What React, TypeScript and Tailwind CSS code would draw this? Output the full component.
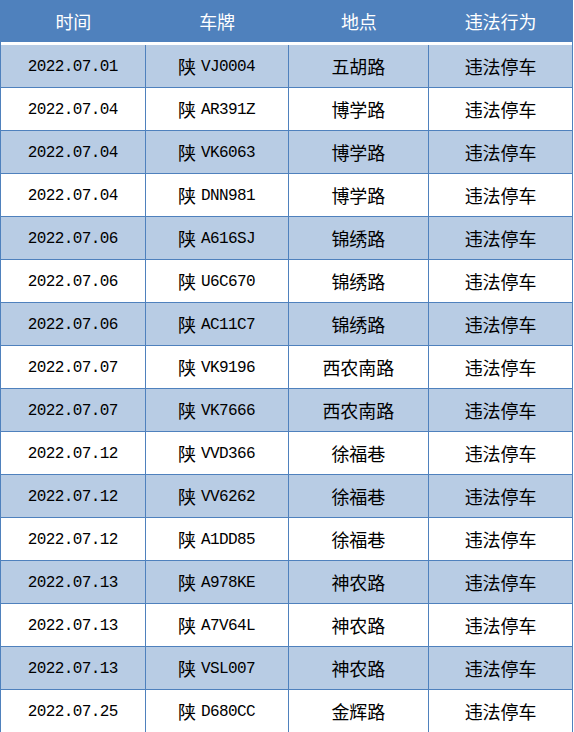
const rows = [
  ["2022.07.01", "VJ0004", "五胡路"],
  ["2022.07.04", "AR391Z", "博学路"],
  ["2022.07.04", "VK6063", "博学路"],
  ["2022.07.04", "DNN981", "博学路"],
  ["2022.07.06", "A616SJ", "锦绣路"],
  ["2022.07.06", "U6C670", "锦绣路"],
  ["2022.07.06", "AC11C7", "锦绣路"],
  ["2022.07.07", "VK9196", "西农南路"],
  ["2022.07.07", "VK7666", "西农南路"],
  ["2022.07.12", "VVD366", "徐福巷"],
  ["2022.07.12", "VV6262", "徐福巷"],
  ["2022.07.12", "A1DD85", "徐福巷"],
  ["2022.07.13", "A978KE", "神农路"],
  ["2022.07.13", "A7V64L", "神农路"],
  ["2022.07.13", "VSL007", "神农路"],
  ["2022.07.25", "D680CC", "金辉路"],
];

const cjk = "font-['Noto_Sans_CJK_SC',sans-serif] text-[18px] leading-none";
const mono = "font-['Liberation_Mono',monospace] text-[16px] tracking-[-0.6px] leading-none translate-y-[1px]";
const widths = ["w-[145px]", "w-[143px]", "w-[141px]", "w-[143px]"];
const headers = ["时间", "车牌", "地点", "违法行为"];

export default function App() {
  return (
    <div className="w-[574px] h-[732px] overflow-hidden bg-white">
      <div className="w-[573px] border-x border-[#4f81bd]">
        <div className="flex h-[42px] bg-[#4f81bd] text-white">
          {headers.map((h, i) => (
            <div key={h} className={`${widths[i]} flex items-center justify-center ${cjk}`}>
              {h}
            </div>
          ))}
        </div>
        <div className="h-[3px] bg-white" />
        {rows.map((r, idx) => (
          <div
            key={idx}
            className={`flex h-[43px] border-b border-[#4f81bd] text-black ${idx % 2 === 0 ? "bg-[#b8cce4]" : "bg-white"}`}
          >
            <div className={`${widths[0]} border-r border-[#4f81bd] flex items-center justify-center`}>
              <span className={mono}>{r[0]}</span>
            </div>
            <div className={`${widths[1]} border-r border-[#4f81bd] flex items-center justify-center`}>
              <span className={cjk}>陕</span>
              <span className={`${mono} ml-[5px]`}>{r[1]}</span>
            </div>
            <div className={`${widths[2]} border-r border-[#4f81bd] flex items-center justify-center ${cjk}`}>
              {r[2]}
            </div>
            <div className={`${widths[3]} flex items-center justify-center ${cjk}`}>违法停车</div>
          </div>
        ))}
      </div>
    </div>
  );
}
